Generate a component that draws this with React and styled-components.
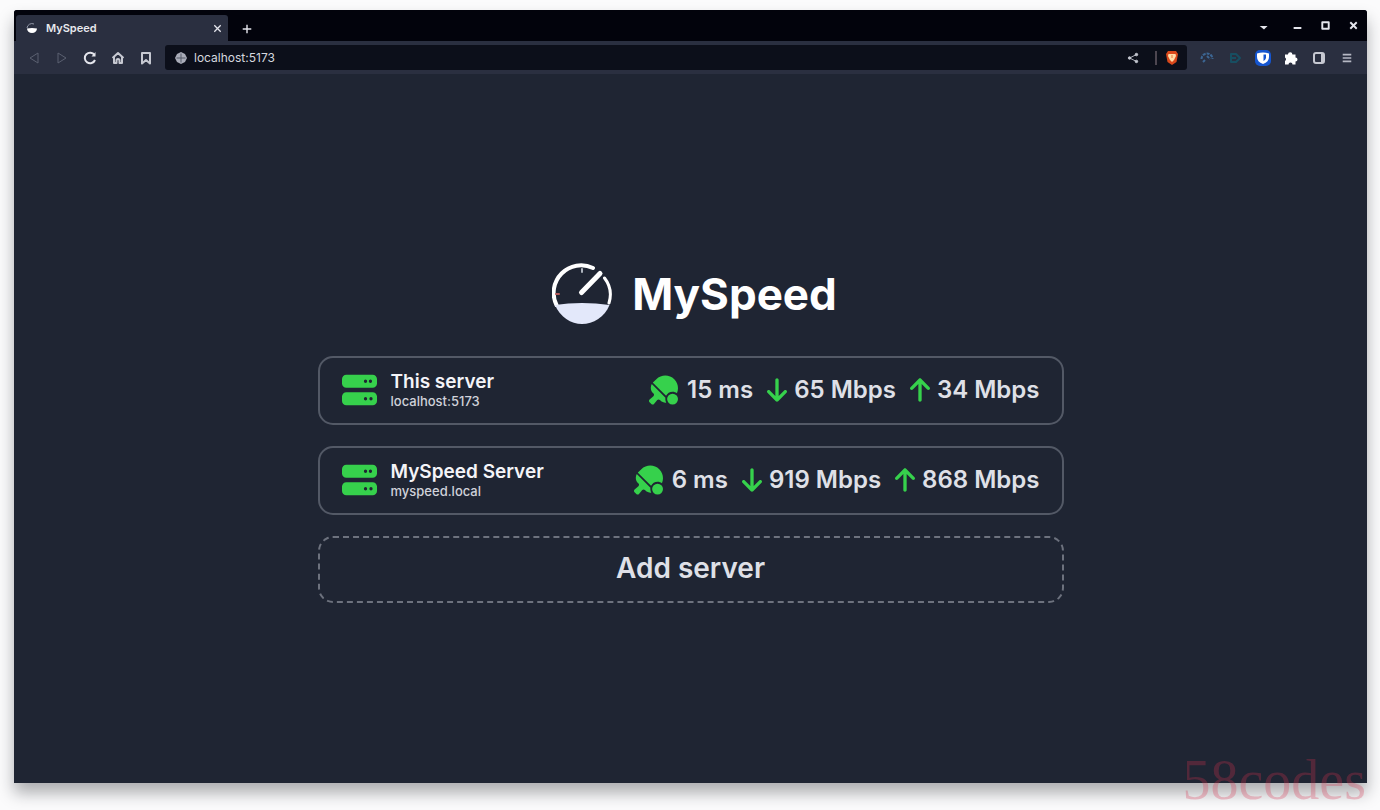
import React from "react";
import styled, { createGlobalStyle } from "styled-components";
import { FaServer, FaTableTennisPaddleBall, FaArrowDown, FaArrowUp } from "react-icons/fa6";

const GlobalStyle = createGlobalStyle`
  *, *::before, *::after { box-sizing: border-box; }
  body {
    margin: 0;
    background: #fbfbfc;
    color: #e8e9ee;
    font-family: Inter, "Liberation Sans", sans-serif;
  }
  button, input { font: inherit; color: inherit; }
`;

const Desktop = styled.div`
  position: relative;
  display: flex;
  min-height: 100vh;
  padding: 10px 13px 27px 14px;
  overflow: hidden;
`;

const BrowserWindow = styled.div`
  flex: 1;
  min-width: 0;
  display: flex;
  flex-direction: column;
  overflow: hidden;
  border-radius: 3px 3px 0 0;
  background: #1f2533;
  box-shadow: 0 10px 16px rgba(20, 22, 30, 0.34);
`;

const TabStrip = styled.div`
  display: flex;
  height: 31px;
  padding-left: 2px;
  background: #02030c;
`;

const Tab = styled.div`
  display: flex;
  align-items: center;
  gap: 8px;
  width: 212px;
  margin-top: 5px;
  padding: 0 6px 0 10px;
  border-radius: 3px 3px 0 0;
  background: #2a2f40;
  font-size: 11px;
  font-weight: 600;
`;

const TabTitle = styled.span`
  flex: 1;
`;

const IconButton = styled.button`
  display: flex;
  align-items: center;
  justify-content: center;
  width: ${({ $width = 28 }) => $width}px;
  height: 20px;
  padding: 0;
  border: 0;
  background: none;
  color: ${({ $color = "#e4e5ec" }) => $color};
`;

const TabActions = styled.div`
  display: flex;
  align-items: center;
  padding-top: 6px;
`;

const WindowControls = styled.div`
  display: flex;
  align-items: center;
  margin-left: auto;
`;

const Toolbar = styled.div`
  display: flex;
  align-items: center;
  height: 33px;
  padding: 0 6px;
  background: #2a2f40;
`;

const AddressBar = styled.div`
  flex: 1;
  display: flex;
  align-items: center;
  height: 25px;
  margin: 0 6px 0 5px;
  padding: 0 1px 0 10px;
  border-radius: 3px;
  background: #0c0f1a;
`;

const AddressInput = styled.input`
  flex: 1;
  min-width: 0;
  padding: 0 0 0 7px;
  border: 0;
  outline: 0;
  background: none;
  color: #d5d7df;
  font-size: 12px;
`;

const AddressDivider = styled.span`
  width: 2px;
  height: 14px;
  margin: 0 1px 0 12px;
  background: #4d4650;
`;

const Page = styled.main`
  flex: 1;
  display: flex;
  flex-direction: column;
  align-items: center;
  justify-content: center;
  padding: 8px 24px 0;
`;

const Brand = styled.header`
  display: flex;
  align-items: center;
  gap: 20px;
  margin-bottom: 31px;
  padding-left: 8px;
`;

const BrandName = styled.h1`
  margin: 0;
  color: #ffffff;
  font-size: 44px;
  font-weight: 700;
  line-height: 60px;
`;

const ServerList = styled.div`
  display: flex;
  flex-direction: column;
  gap: 21px;
  width: 100%;
  max-width: 746px;
`;

const ServerCard = styled.a`
  display: flex;
  align-items: center;
  height: 69px;
  padding: 0 22px;
  border: 2px solid #535966;
  border-radius: 15px;
  color: inherit;
  text-decoration: none;
`;

const ServerGlyph = styled(FaServer)`
  width: 35px;
  height: 36px;
  color: #36d14c;
`;

const ServerText = styled.div`
  flex: 1;
  display: flex;
  flex-direction: column;
  margin-left: 14px;
`;

const ServerName = styled.span`
  color: #f4f4f8;
  font-size: 19px;
  font-weight: 600;
  line-height: 22px;
`;

const ServerHost = styled.span`
  color: #d0d2da;
  font-size: 13px;
  font-weight: 500;
  line-height: 16px;
`;

const Stats = styled.div`
  display: flex;
  align-items: center;
  gap: 14px;
`;

const Stat = styled.span`
  display: flex;
  align-items: center;
  gap: ${({ $gap = 7 }) => $gap}px;
  color: #dfe0e7;
  font-size: 24px;
  font-weight: 600;
  line-height: 30px;

  svg {
    width: ${({ $icon = 20 }) => $icon}px;
    height: 30px;
    color: #36d14c;
  }
`;

const AddButton = styled.button`
  height: 67px;
  padding: 0 0 2px;
  border: 2px dashed #6d727e;
  border-radius: 15px;
  background: none;
  color: #dfe0e7;
  font-size: 28px;
  font-weight: 600;
`;

const Watermark = styled.span`
  position: absolute;
  right: 14px;
  bottom: 0;
  color: rgba(214, 50, 80, 0.28);
  font-family: "Liberation Serif", serif;
  font-size: 56px;
  line-height: 60px;
  pointer-events: none;
`;

const Line = ({ size = 14, width = 2, children }) => (
  <svg width={size} height={size} viewBox="0 0 14 14" fill="none" stroke="currentColor" strokeWidth={width} strokeLinejoin="round" aria-hidden="true">
    {children}
  </svg>
);

const Favicon = () => (
  <svg width="12" height="12" viewBox="0 0 12 12" aria-hidden="true">
    <path d="M1 6a5 5 0 0 1 7-4" fill="none" stroke="#9298a8" />
    <path d="M1 6.500q5-1 10 0a5 4.500 0 0 1-10 0z" fill="#fff" />
  </svg>
);

const BrandLogo = () => (
  <svg width="60" height="62" viewBox="0 0 60 62" fill="none" strokeLinecap="round" aria-hidden="true">
    <g stroke="#fff" strokeWidth="4">
      <path d="M4.500 42A27.500 27.500 0 0 1 41 5" />
      <path d="M52.500 15A27.500 27.500 0 0 1 57 40" strokeWidth="3" />
      <path d="M29.500 29.500 48 10.500" strokeWidth="5" />
    </g>
    <path d="M30 6v3" stroke="#aeb4be" strokeWidth="2" />
    <path d="M4 31h3" stroke="#b25858" strokeWidth="2" />
    <path d="M3 42Q16 40 30 40t27.500 2C53 54 41 61 30 61S8 54 3 42z" fill="#e3e8fa" />
  </svg>
);

const NavIcons = () => (
  <>
    <IconButton aria-label="Back" $color="#5a6070"><Line width={1}><path d="M11 2v10L3 7z" /></Line></IconButton>
    <IconButton aria-label="Forward" $color="#5a6070"><Line width={1}><path d="M3 2v10l8-5z" /></Line></IconButton>
    <IconButton aria-label="Reload">
      <Line><path d="M11.500 4A5.300 5.300 0 1 0 12 9" /><path d="M12.500 1v4.500H8.500z" fill="currentColor" stroke="none" /></Line>
    </IconButton>
    <IconButton aria-label="Home" $color="#c6c8d1">
      <Line><path d="M1.500 7 7 2l5.500 5M3 6v6h2.500V9.500a1.500 1.500 0 0 1 3 0V12H11V6" /></Line>
    </IconButton>
    <IconButton aria-label="Bookmark" $color="#c6c8d1">
      <Line><path d="M3 2h8v10.500L7 9l-4 3.500z" /></Line>
    </IconButton>
  </>
);

const Globe = () => (
  <svg width="12" height="12" viewBox="0 0 12 12" aria-hidden="true">
    <path d="M6 0l4 2 2 4-2 4-4 2-4-2-2-4 2-4z" fill="#a9acb8" />
    <path d="M1.500 6h9M6 1.500v9" stroke="#555a68" />
  </svg>
);

const Extensions = () => (
  <>
    <IconButton aria-label="Sync extension" $color="#3c6693">
      <Line><path d="M1.500 8A5.500 5.500 0 0 1 12.500 8M3 11l2-2M7 5l3 3" strokeDasharray="3 1" /></Line>
    </IconButton>
    <IconButton aria-label="Video extension" $color="#174e61">
      <Line><path d="M3 3h5l4 4-4 4H3zM3 7h5" /></Line>
    </IconButton>
    <IconButton aria-label="Password manager">
      <svg width="16" height="16" viewBox="0 0 16 16" aria-hidden="true">
        <rect width="16" height="16" rx="5" fill="#1555cf" />
        <path d="M2 3.500q6-2 12 0v3.500q0 5-6 7-6-2-6-7z" fill="#fff" />
        <path d="M8.500 4.500H11V8q-.5 2-2.500 3z" fill="#1555cf" />
      </svg>
    </IconButton>
    <IconButton aria-label="Extensions" $color="#fff">
      <svg width="14" height="14" viewBox="0 0 14 14" fill="currentColor" aria-hidden="true">
        <path d="M4 3.500a2.200 2.200 0 1 1 4.400 0H11.500v3a2 2 0 1 1 0 4V13.500H8.500a2 2 0 0 0-4 0H1v-3.500a2 2 0 0 0 0-3.500v-3z" />
      </svg>
    </IconButton>
    <IconButton aria-label="Sidebar" $color="#c6c8d1">
      <Line><rect x="2" y="2" width="10" height="10" rx="2" /><path d="M10 3v8" /></Line>
    </IconButton>
    <IconButton aria-label="Menu" $color="#b5b8c3">
      <Line size={12}><path d="M2 3h10M2 7h10M2 11h10" /></Line>
    </IconButton>
  </>
);

const servers = [
  { name: "This server", host: "localhost:5173", ping: 15, down: 65, up: 34 },
  { name: "MySpeed Server", host: "myspeed.local", ping: 6, down: 919, up: 868 },
];

export default function App() {
  return (
    <Desktop>
      <GlobalStyle />
      <BrowserWindow>
        <TabStrip>
          <Tab>
            <Favicon />
            <TabTitle>MySpeed</TabTitle>
            <IconButton $width={10} aria-label="Close tab"><Line size={9}><path d="M2 2l10 10M12 2 2 12" /></Line></IconButton>
          </Tab>
          <TabActions>
            <IconButton $width={38} aria-label="New tab"><Line size={10}><path d="M7 1v12M1 7h12" /></Line></IconButton>
          </TabActions>
          <WindowControls>
            <IconButton $width={38} aria-label="Search tabs"><Line size={10}><path d="M1 7l6 5 5-5z" fill="currentColor" stroke="none" /></Line></IconButton>
            <IconButton aria-label="Minimize"><Line size={9}><path d="M1 11h12" strokeWidth="3" /></Line></IconButton>
            <IconButton aria-label="Maximize"><Line size={9} width={3}><rect x="2" y="2" width="10" height="10" /></Line></IconButton>
            <IconButton aria-label="Close window"><Line size={9}><path d="M2 2l10 10M12 2 2 12" strokeWidth="3" /></Line></IconButton>
          </WindowControls>
        </TabStrip>
        <Toolbar>
          <NavIcons />
          <AddressBar>
            <Globe />
            <AddressInput type="text" aria-label="Address" defaultValue="localhost:5173" />
            <IconButton $width={20} aria-label="Share" $color="#c6c8d1">
              <Line size={12} width={1}>
                <path d="M11 3 3 7l8 4" />
                <g fill="currentColor"><circle cx="11" cy="3" r="1.500" /><circle cx="3" cy="7" r="1.500" /><circle cx="11" cy="11" r="1.500" /></g>
              </Line>
            </IconButton>
            <AddressDivider />
            <IconButton aria-label="Brave Shields">
              <svg width="14" height="16" viewBox="0 0 14 16" aria-hidden="true">
                <path d="M3 1h8l2 3-1.500 8L7 15l-4.500-3L1 4z" fill="#d9481b" />
                <path d="M3.500 4h7L11 6 9 10l-2 2-2-2-2-4z" fill="#ffdca8" />
                <path d="M7 5v3" stroke="#e77a3d" />
              </svg>
            </IconButton>
          </AddressBar>
          <Extensions />
        </Toolbar>
        <Page>
          <Brand>
            <BrandLogo />
            <BrandName>MySpeed</BrandName>
          </Brand>
          <ServerList>
            {servers.map((s) => (
              <ServerCard key={s.name} href="#">
                <ServerGlyph aria-hidden="true" />
                <ServerText>
                  <ServerName>{s.name}</ServerName>
                  <ServerHost>{s.host}</ServerHost>
                </ServerText>
                <Stats>
                  <Stat $icon={29} $gap={9}><FaTableTennisPaddleBall aria-hidden="true" />{s.ping} ms</Stat>
                  <Stat><FaArrowDown aria-hidden="true" />{s.down} Mbps</Stat>
                  <Stat><FaArrowUp aria-hidden="true" />{s.up} Mbps</Stat>
                </Stats>
              </ServerCard>
            ))}
            <AddButton type="button">Add server</AddButton>
          </ServerList>
        </Page>
      </BrowserWindow>
      <Watermark>58codes</Watermark>
    </Desktop>
  );
}
